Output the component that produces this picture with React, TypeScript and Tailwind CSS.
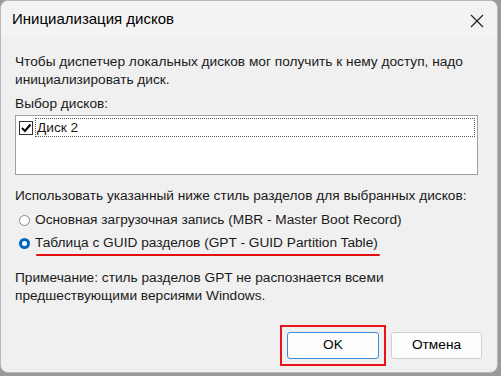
import React from 'react';

export default function App() {
    return (
        <div
            className="w-[501px] h-[376px] bg-[#9a9a9a] overflow-hidden"
            style={{ fontFamily: '"Liberation Sans", "Noto Sans", sans-serif' }}
        >
            <div className="w-[498px] h-[373px] bg-[#f0f0f0] rounded-lg border border-[#b8b8b8] overflow-hidden flex flex-col text-[13.7px] text-[#1a1a1a]">
                <div className="h-[37px] shrink-0 bg-[#f3f3f3] flex items-center justify-between pl-[11px] pr-[13px]">
                    <span className="text-[15px] text-black">Инициализация дисков</span>
                    <svg width="14" height="14" viewBox="0 0 14 14" className="mt-[3px]">
                        <path d="M1 1 L13 13 M13 1 L1 13" stroke="#222" strokeWidth="1.2" />
                    </svg>
                </div>
                <div className="flex flex-col px-[14px] pt-[15px]">
                    <p className="leading-[18px]">
                        Чтобы диспетчер локальных дисков мог получить к нему доступ, надо
                        <br />
                        инициализировать диск.
                    </p>
                    <p className="mt-[6px] leading-[18px]">Выбор дисков:</p>
                    <div className="mt-[2px] mr-[5px] h-[60px] bg-white border border-[#a0a0a0] p-[2px]">
                        <div className="flex items-center gap-[2px]">
                            <div className="w-[14px] h-[14px] ml-[1px] border border-[#333] bg-white flex items-center justify-center">
                                <svg width="12" height="12" viewBox="0 0 12 12">
                                    <path d="M2 6 L5 9 L10.5 2.5" stroke="#000" strokeWidth="2" fill="none" />
                                </svg>
                            </div>
                            <div className="flex-1 h-[19px] border border-dotted border-[#555] flex items-center pl-[1px] leading-none">
                                Диск 2
                            </div>
                        </div>
                    </div>
                    <p className="mt-[12px] leading-[18px]">
                        Использовать указанный ниже стиль разделов для выбранных дисков:
                    </p>
                    <div className="mt-[6px] flex flex-col gap-[5px] pl-[4px]">
                        <label className="flex items-center gap-[5px] leading-[18px]">
                            <span className="w-[11px] h-[11px] rounded-full border border-[#888] bg-white" />
                            Основная загрузочная запись (MBR - Master Boot Record)
                        </label>
                        <label className="flex items-center gap-[5px] leading-[18px]">
                            <span className="w-[11px] h-[11px] rounded-full bg-[#0067c0] flex items-center justify-center">
                                <span className="w-[5px] h-[5px] rounded-full bg-white" />
                            </span>
                            <span className="relative">
                                Таблица с GUID разделов (GPT - GUID Partition Table)
                                <span className="absolute left-[1px] right-[-2px] bottom-[-4px] h-[2px] bg-[#e01010] rounded-full" />
                            </span>
                        </label>
                    </div>
                    <p className="mt-[17px] leading-[18px]">
                        Примечание: стиль разделов GPT не распознается всеми
                        <br />
                        предшествующими версиями Windows.
                    </p>
                    <div className="mt-[20px] flex justify-end gap-[5px] pr-[1px]">
                        <div className="border-2 border-[#e8141c] p-[5px]">
                            <button className="w-[92px] h-[27px] bg-[#fdfdfd] border border-[#3c8fd8] rounded-[3px] text-black">
                                OK
                            </button>
                        </div>
                        <div className="pt-[7px]">
                            <button className="w-[91px] h-[27px] bg-[#fdfdfd] border border-[#d0d0d0] rounded-[3px] text-black">
                                Отмена
                            </button>
                        </div>
                    </div>
                </div>
            </div>
        </div>
    );
}
